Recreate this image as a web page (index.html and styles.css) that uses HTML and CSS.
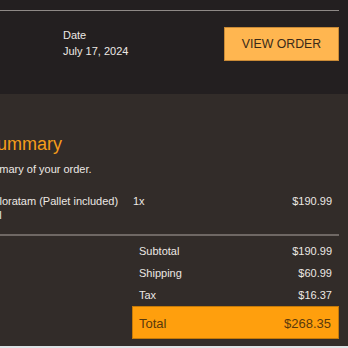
FILE: index.html
```html
<!DOCTYPE html>
<html>
<head>
<meta charset="utf-8">
<link rel="stylesheet" href="styles.css">
</head>
<body>
<div class="page">
  <header class="top">
    <div class="rule"></div>
    <div class="meta-row">
      <div class="date">
        <div>Date</div>
        <div>July 17, 2024</div>
      </div>
      <div class="btn">VIEW ORDER</div>
    </div>
  </header>
  <section class="summary">
    <h2 class="title"><span class="cut-title">Order Summary</span></h2>
    <p class="sub"><span class="cut-sub">This is a summary of your order.</span></p>
    <div class="item">
      <div class="item-name">
        <div class="cut-name">Chloratam (Pallet included)</div>
        <div class="cut-extra">Size: Full</div>
      </div>
      <div class="item-qty">1x</div>
      <div class="item-price">$190.99</div>
    </div>
    <div class="divider"></div>
    <div class="totals">
      <div class="trow"><span>Subtotal</span><span>$190.99</span></div>
      <div class="trow"><span>Shipping</span><span>$60.99</span></div>
      <div class="trow"><span>Tax</span><span>$16.37</span></div>
      <div class="grand"><span>Total</span><span>$268.35</span></div>
    </div>
  </section>
</div>
</body>
</html>
```
FILE: styles.css
```css
html, body {
  margin: 0;
  padding: 0;
}
body {
  background: #dde3e6;
  font-family: "Liberation Sans", Arial, sans-serif;
  font-size: 11px;
  overflow: hidden;
}
.page {
  width: 348px;
}
.top {
  background: #231f20;
  height: 94px;
  padding: 10px 9px 0 0;
  box-sizing: border-box;
}
.rule {
  height: 1px;
  background: #8e8986;
}
.meta-row {
  margin-top: 16px;
  display: flex;
  justify-content: space-between;
  align-items: flex-start;
}
.date {
  margin-left: 63px;
  color: #ece8e4;
  line-height: 16px;
}
.btn {
  width: 115px;
  height: 34px;
  box-sizing: border-box;
  background: #ffb650;
  border: 1px solid #c98a36;
  color: #3a2a18;
  font-size: 12.3px;
  display: flex;
  align-items: center;
  justify-content: center;
}
.summary {
  background: #322c29;
  height: 252px;
  box-sizing: border-box;
  padding: 38px 9px 0 0;
  overflow: hidden;
}
.title {
  margin: 0;
  font-weight: normal;
  font-size: 18px;
  line-height: 24px;
  color: #f59d1a;
  white-space: nowrap;
}
.cut-title {
  display: inline-block;
  margin-left: -66px;
}
.sub {
  margin: 5px 0 0;
  line-height: 16px;
  color: #ece8e4;
  white-space: nowrap;
}
.cut-sub {
  display: inline-block;
  margin-left: -65.5px;
}
.item {
  margin-top: 17px;
  display: flex;
  line-height: 14px;
  color: #ece8e4;
}
.item-name {
  flex: 0 0 133px;
  white-space: nowrap;
}
.cut-name {
  margin-left: -14.6px;
}
.cut-extra {
  margin-left: -43.5px;
}
.item-qty {
  flex: 0 0 auto;
}
.item-price {
  flex: 1;
  text-align: right;
  padding-right: 7px;
}
.divider {
  margin-top: 12px;
  height: 2px;
  background: #6f6864;
}
.totals {
  margin: 4px 0 0 132px;
  color: #ece8e4;
}
.trow {
  display: flex;
  justify-content: space-between;
  padding: 0 7px;
  line-height: 22px;
}
.grand {
  display: flex;
  justify-content: space-between;
  align-items: center;
  height: 33px;
  box-sizing: border-box;
  padding: 1px 7px 0 6px;
  background: #ff9f0d;
  border: 1px solid #c47a0a;
  color: #5a3a0c;
  font-size: 13px;
}
```
